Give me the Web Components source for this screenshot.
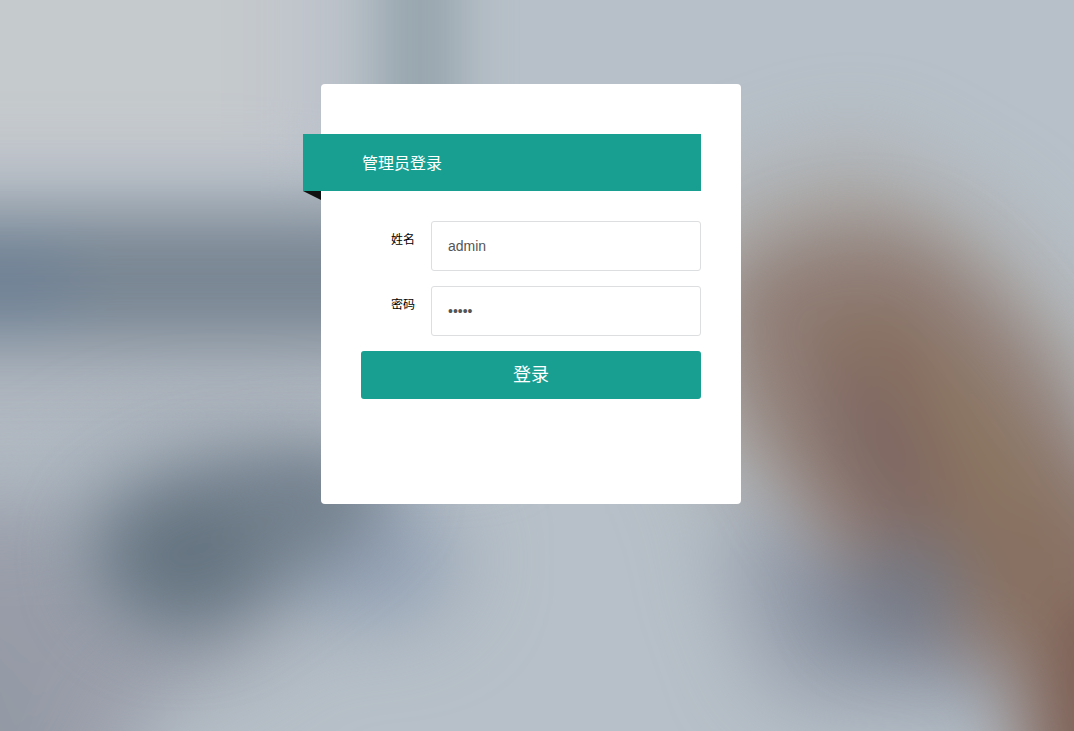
<!DOCTYPE html>
<html lang="zh-CN">
<head>
<meta charset="utf-8">
<title>管理员登录</title>
<style>
  html, body { height: 100%; }
  body {
    margin: 0;
    font: 12px/18px "Liberation Sans", "Noto Sans CJK SC", sans-serif;
    color: #000;
  }
</style>
</head>
<body>
<login-page>
  <blurred-backdrop slot="backdrop"></blurred-backdrop>
  <login-card>
    <ribbon-title slot="title">管理员登录</ribbon-title>
    <form-field label="姓名" type="text" name="username" value="admin"></form-field>
    <form-field label="密码" type="password" name="password" value="admin"></form-field>
    <submit-button>登录</submit-button>
  </login-card>
</login-page>

<script>
  class BaseElement extends HTMLElement {
    constructor() {
      super();
      this.attachShadow({ mode: 'open' }).innerHTML = this.constructor.markup;
    }
  }

  customElements.define('login-page', class extends BaseElement {
    static markup = `
      <style>
        :host { display: block; position: relative; min-height: 100%; overflow: hidden; background: #b5bdc7; }
        main { position: relative; display: flex; justify-content: center; padding: 84px 12px 84px 0; }
      </style>
      <slot name="backdrop"></slot>
      <main><slot></slot></main>`;
  });

  /* Out-of-focus photo behind the card */
  customElements.define('blurred-backdrop', class extends BaseElement {
    static markup = `
      <style>
        :host { display: block; position: absolute; inset: 0; }
        svg { display: block; width: 100%; height: 100%; }
      </style>
      <svg viewBox="0 0 1074 731" preserveAspectRatio="xMidYMid slice" aria-hidden="true">
        <defs>
          <filter id="s" filterUnits="userSpaceOnUse" x="-300" y="-300" width="1700" height="1400" color-interpolation-filters="sRGB"><feGaussianBlur stdDeviation="26"/></filter>
          <filter id="m" filterUnits="userSpaceOnUse" x="-300" y="-300" width="1700" height="1400" color-interpolation-filters="sRGB"><feGaussianBlur stdDeviation="33"/></filter>
          <filter id="l" filterUnits="userSpaceOnUse" x="-300" y="-300" width="1700" height="1400" color-interpolation-filters="sRGB"><feGaussianBlur stdDeviation="45"/></filter>
        </defs>
        <rect width="1074" height="731" fill="#b7c0c8"/>
        <g filter="url(#m)">
          <path d="M-200-200H340V180H-200Z" fill="#c0c4cc"/>
          <path d="M-200-200H265V135H-200Z" fill="#c5cacc"/>
          <path d="M-200 330H500V450H-200Z" fill="#b0b7c0"/>
        </g>
        <path d="M382-200H458V200H382Z" fill="#96a4ad" filter="url(#s)"/>
        <g filter="url(#m)">
          <path d="M-200 213H500V345H-200Z" fill="#798693"/>
          <ellipse cx="0" cy="282" rx="80" ry="38" fill="#6e8196"/>
        </g>
        <g filter="url(#l)">
          <path d="M-200 490L50 500 110 600 300 650 150 700 70 900H-200Z" fill="#989ca8"/>
          <path d="M-200 660H0L50 900H-200Z" fill="#8f99a2"/>
          <ellipse cx="220" cy="530" rx="170" ry="95" fill="#9aa5b0"/>
          <ellipse cx="375" cy="560" rx="80" ry="60" fill="#8c9bb0"/>
          <path d="M720 520L1000 540 1030 700 780 690Z" fill="#8b93a2"/>
          <path d="M690 210L860 150 1000 230 1130 400 900 500 700 470Z" fill="#a9a5a2"/>
        </g>
        <g filter="url(#m)">
          <path d="M90 560C80 500 180 455 330 450L400 478C370 540 290 575 240 620C180 655 95 625 90 560Z" fill="#727f8c"/>
          <ellipse cx="190" cy="553" rx="55" ry="42" fill="#61717d"/>
        </g>
        <g filter="url(#m)">
          <path d="M725 285C780 240 850 215 915 238C1000 285 1050 380 1120 470L1250 580V900H1038L1000 670 880 620C830 555 770 460 735 380Z" fill="#907e77"/>
          <path d="M800 320L900 300 980 390 1100 540V800H1075L1030 640 900 560Z" fill="#887061"/>
          <ellipse cx="985" cy="440" rx="22" ry="100" transform="rotate(-28 985 440)" fill="#8c775f"/>
          <ellipse cx="880" cy="450" rx="42" ry="95" transform="rotate(-25 880 450)" fill="#7e6762"/>
          <path d="M1055 610H1200V800H1055Z" fill="#7c5e53"/>
          <ellipse cx="905" cy="590" rx="62" ry="50" fill="#757985"/>
        </g>
      </svg>`;
  });

  customElements.define('login-card', class extends BaseElement {
    static markup = `
      <style>
        :host { display: block; box-sizing: border-box; width: 420px; max-width: 100%; min-height: 420px; padding: 50px 40px; background: #fff; border-radius: 4px; }
        form { display: grid; gap: 15px; margin: 30px 0 0; }
      </style>
      <slot name="title"></slot>
      <form onsubmit="return false"><slot></slot></form>`;
  });

  customElements.define('ribbon-title', class extends BaseElement {
    static markup = `
      <style>
        :host { display: block; position: relative; margin-left: -58px; padding: 18px 59px 15px; background: #189f92; color: #fff; }
        :host::after { content: ""; position: absolute; left: 0; top: 100%; width: 18px; height: 9px; background: #111; clip-path: polygon(0 0, 100% 0, 100% 100%); }
        h1 { margin: 0; font-size: 16px; line-height: 24px; font-weight: 400; }
      </style>
      <h1><slot></slot></h1>`;
  });

  customElements.define('form-field', class extends BaseElement {
    static markup = `
      <style>
        :host { display: grid; grid-template-columns: 54px 1fr; gap: 16px; }
        label { padding-top: 10px; text-align: right; }
        input { box-sizing: border-box; width: 100%; height: 50px; margin: 0; padding: 0 16px; border: 1px solid #dcdee0; border-radius: 3px; background: #fff; color: #555; font: 14px/20px "Liberation Sans", sans-serif; outline: none; }
        input:focus { border-color: #189f92; }
      </style>
      <label for="control"></label>
      <input id="control">`;
    connectedCallback() {
      const input = this.shadowRoot.querySelector('input');
      this.shadowRoot.querySelector('label').textContent = this.getAttribute('label');
      input.type = this.getAttribute('type');
      input.name = this.getAttribute('name');
      input.value = this.getAttribute('value');
    }
  });

  customElements.define('submit-button', class extends BaseElement {
    static markup = `
      <style>
        :host { display: block; }
        button { display: block; width: 100%; height: 48px; margin: 0; padding: 0; border: 0; border-radius: 3px; background: #189f92; color: #fff; font: inherit; font-size: 18px; line-height: 48px; cursor: pointer; }
      </style>
      <button type="submit"><slot></slot></button>`;
  });
</script>
</body>
</html>
